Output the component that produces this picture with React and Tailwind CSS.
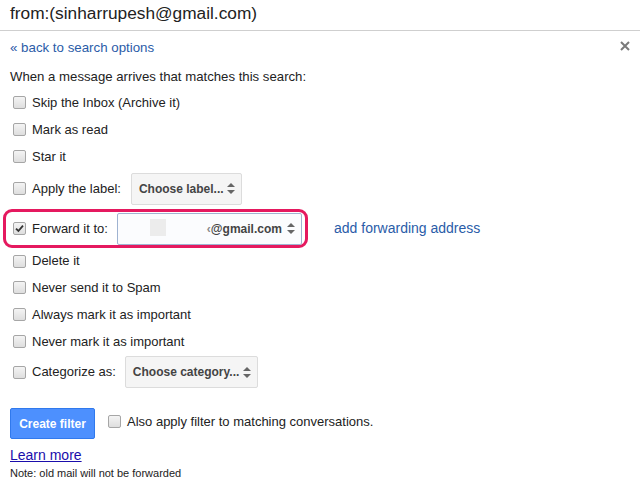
import React from "react";

const Box = ({ checked }) => (
  <span className="ml-[3px] mr-[6px] flex h-[13px] w-[13px] shrink-0 items-center justify-center rounded-[2px] border border-[#a6a6a6] bg-gradient-to-b from-[#f4f4f4] to-[#dedede]">
    {checked && (
      <svg width="9" height="9" viewBox="0 0 9 9">
        <path d="M1 4.6 L3.4 7 L8 1.6" fill="none" stroke="#333" strokeWidth="1.8" />
      </svg>
    )}
  </span>
);

const Arrows = () => (
  <svg width="8" height="11" viewBox="0 0 8 11" className="shrink-0">
    <path d="M4 0 L8 4 L0 4 Z" fill="#666" />
    <path d="M0 7 L8 7 L4 11 Z" fill="#666" />
  </svg>
);

const Select = ({ label, width }) => (
  <div
    className={`flex h-[32px] ${width} items-center justify-between rounded-[2px] border border-[#dcdcdc] bg-[#f5f5f5] pl-[7px] pr-[6px] text-[12px] font-bold text-[#444]`}
  >
    <span>{label}</span>
    <Arrows />
  </div>
);

const Row = ({ text, checked, h = "h-[27px]", children }) => (
  <div className={`flex ${h} items-center`}>
    <Box checked={checked} />
    <span>{text}</span>
    {children}
  </div>
);

export default function App() {
  return (
    <div className="relative h-[490px] w-[640px] overflow-hidden bg-white font-['Liberation_Sans',Arial,sans-serif] text-[13px] text-[#222]">
      <div className="flex h-[31px] items-center border-b border-[#cfcfcf] pl-[10px] pb-[3px] text-[17.3px] text-[#222]">
        from:(sinharrupesh@gmail.com)
      </div>

      <div className="pl-[10px]">
        <div className="flex h-[33px] items-center justify-between pr-[10px]">
          <span className="text-[13.3px] text-[#2a5ca8]">« back to search options</span>
          <svg width="10" height="10" viewBox="0 0 10 10" className="mb-[3px]">
            <path d="M1 1 L9 9 M9 1 L1 9" stroke="#7a7a7a" strokeWidth="2" />
          </svg>
        </div>

        <div className="flex h-[25px] items-center text-[13.2px]">
          When a message arrives that matches this search:
        </div>

        <Row text="Skip the Inbox (Archive it)" />
        <Row text="Mark as read" />
        <Row text="Star it" />
        <Row text="Apply the label:" h="h-[37px]">
          <div className="ml-[10px]">
            <Select label="Choose label..." width="w-[111px]" />
          </div>
        </Row>

        <div className="mt-[2px] flex items-center">
          <div className="-ml-[7px] flex h-[39px] w-[305px] items-center rounded-[9px] border-[3px] border-[#e5195f] pl-[4px]">
            <Box checked />
            <span>Forward it to:</span>
            <div className="ml-[9px] flex h-[32px] w-[185px] items-center justify-between rounded-[2px] border border-[#9fb3d1] bg-[#fbfcfe] pl-[8px] pr-[6px] text-[12px] font-bold text-[#444]">
              <div className="flex items-center">
                <span className="mt-[-2px] ml-[24px] h-[17px] w-[16px] bg-[#ececec]" />
                <span className="ml-[41px] text-[#888]">‹</span>
                <span>@gmail.com</span>
              </div>
              <Arrows />
            </div>
          </div>
          <span className="ml-[26px] text-[14px] text-[#2a5ca8]">add forwarding address</span>
        </div>

        <Row text="Delete it" h="h-[26px]" />
        <Row text="Never send it to Spam" />
        <Row text="Always mark it as important" />
        <Row text="Never mark it as important" />
        <Row text="Categorize as:" h="h-[34px]">
          <div className="ml-[9px]">
            <Select label="Choose category..." width="w-[133px]" />
          </div>
        </Row>

        <div className="mt-[19px] flex items-start">
          <button className="h-[31px] w-[85px] rounded-[2px] border border-[#3079ed] bg-[#4d90fe] text-[12px] font-bold text-white">
            Create filter
          </button>
          <div className="ml-[10px] mt-[4px] flex items-center">
            <Box />
            <span>Also apply filter to matching conversations.</span>
          </div>
        </div>

        <div className="mt-[7px] text-[14px] leading-[18px] text-[#1a0dab] underline">
          Learn more
        </div>
        <div className="mt-[2px] text-[11px] leading-[14px] text-[#222]">
          Note: old mail will not be forwarded
        </div>
      </div>
    </div>
  );
}
